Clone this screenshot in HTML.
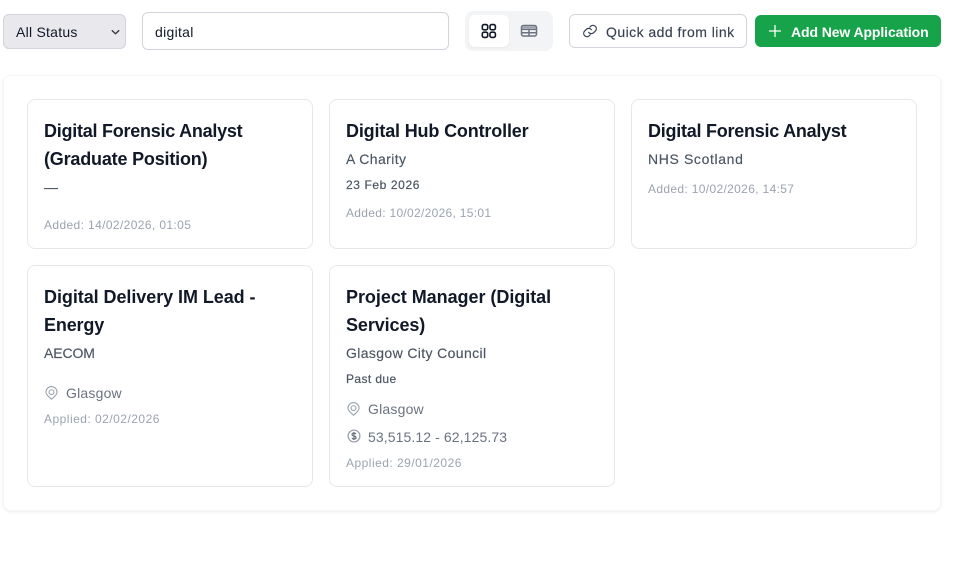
<!DOCTYPE html>
<html lang="en">
<head>
<meta charset="utf-8">
<title>Applications</title>
<style>
html,body{margin:0;padding:0;background:#fff;}
body{width:956px;height:567px;position:relative;overflow:hidden;font-family:"Liberation Sans",sans-serif;}
div,span,svg{position:absolute;box-sizing:border-box;}
.t{white-space:nowrap;}
.card{background:#fff;border:1px solid #e5e7eb;border-radius:8px;}
.title{font-size:18px;font-weight:700;color:#111827;line-height:28px;height:28px;white-space:nowrap;}
.co{font-size:14px;color:#4b5563;line-height:20px;height:20px;letter-spacing:.37px;white-space:nowrap;-webkit-text-stroke:.15px #4b5563;}
.due{font-size:12px;color:#4b5563;line-height:16px;height:16px;letter-spacing:.4px;white-space:nowrap;-webkit-text-stroke:.2px #4b5563;}
.meta{font-size:14px;color:#6b7280;line-height:20px;height:20px;letter-spacing:.2px;white-space:nowrap;}
.date{font-size:12px;color:#9ca3af;line-height:16px;height:16px;letter-spacing:.36px;white-space:nowrap;}
</style>
</head>
<body>
<!-- toolbar -->
<div style="left:3px;top:14px;width:123px;height:35px;background:#e8e8ed;border:1px solid #d1d5db;border-radius:6px;"></div>
<div class="t" style="left:16px;top:22px;font-size:14px;line-height:20px;color:#111827;letter-spacing:.25px;">All Status</div>
<svg style="left:110px;top:28px;" width="11" height="8" viewBox="0 0 11 8" fill="none" stroke="#333" stroke-width="1.3" stroke-linecap="round" stroke-linejoin="round"><path d="M2.2 2.6L5.5 5.8L8.8 2.6"/></svg>

<div style="left:142px;top:12px;width:307px;height:38px;background:#fff;border:1px solid #d1d5db;border-radius:6px;"></div>
<div class="t" style="left:155px;top:22px;font-size:14px;line-height:20px;color:#111827;letter-spacing:.3px;">digital</div>

<div style="left:465px;top:11px;width:88px;height:40px;background:#f3f4f6;border-radius:8px;"></div>
<div style="left:469px;top:15px;width:40px;height:32px;background:#fff;border-radius:6px;box-shadow:0 1px 2px rgba(0,0,0,.05);"></div>
<svg style="left:480px;top:22px;" width="18" height="18" viewBox="0 0 18 18" fill="none" stroke="#111827" stroke-width="1.6"><rect x="2.3" y="2.6" width="5.4" height="5.2" rx="1.7"/><rect x="10" y="2.6" width="5.4" height="5.2" rx="1.7"/><rect x="2.3" y="10.2" width="5.4" height="5.2" rx="1.7"/><rect x="10" y="10.2" width="5.4" height="5.2" rx="1.7"/></svg>
<svg style="left:520px;top:22px;" width="18" height="18" viewBox="0 0 18 18" fill="none" stroke="#6b7280" stroke-width="1.5"><rect x="1.5" y="3.5" width="15" height="10.5" rx="2"/><path d="M1.5 7.4H16.5M1.5 10.8H16.5M9 7.4V14"/><path d="M2.5 5.4H15.5" stroke="#9ca3af" stroke-width="1.8"/></svg>

<div style="left:569px;top:14px;width:178px;height:34px;background:#fff;border:1px solid #d1d5db;border-radius:6px;"></div>
<svg style="left:582px;top:23px;" width="16" height="16" viewBox="0 0 24 24" fill="none" stroke="#374151" stroke-width="1.8" stroke-linecap="round" stroke-linejoin="round"><path d="M10 14a5 5 0 0 0 7.5.5l3-3a5 5 0 0 0-7-7l-1.7 1.7"/><path d="M14 10a5 5 0 0 0-7.5-.5l-3 3a5 5 0 0 0 7 7l1.7-1.7"/></svg>
<div class="t" style="left:606px;top:22px;font-size:14px;line-height:20px;color:#374151;letter-spacing:.46px;-webkit-text-stroke:.15px #374151;">Quick add from link</div>

<div style="left:755px;top:15px;width:186px;height:32px;background:#16a34a;border-radius:6px;"></div>
<svg style="left:767px;top:23px;" width="16" height="16" viewBox="0 0 16 16" fill="none" stroke="#fff" stroke-width="1.3" stroke-linecap="round"><path d="M8 2.5V13.5M2.5 8H13.5"/></svg>
<div class="t" style="left:791px;top:22px;font-size:14px;line-height:20px;color:#fff;font-weight:700;letter-spacing:-.1px;">Add New Application</div>

<!-- panel -->
<div style="left:3px;top:75px;width:938px;height:436px;background:#fff;border-radius:8px;box-shadow:0 1px 3px rgba(0,0,0,.08);border:1px solid #f6f6f8;"></div>

<!-- card 1 -->
<div class="card" style="left:27px;top:99px;width:286px;height:150px;"></div>
<div class="title" style="left:44px;top:117px;letter-spacing:-.25px;">Digital Forensic Analyst</div>
<div class="title" style="left:44px;top:145px;letter-spacing:-.19px;">(Graduate Position)</div>
<div class="co" style="left:44px;top:177px;letter-spacing:0;">—</div>
<div class="date" style="left:44px;top:217px;letter-spacing:.38px;">Added: 14/02/2026, 01:05</div>

<!-- card 2 -->
<div class="card" style="left:329px;top:99px;width:286px;height:150px;"></div>
<div class="title" style="left:346px;top:117px;letter-spacing:-.16px;">Digital Hub Controller</div>
<div class="co" style="left:346px;top:149px;letter-spacing:.4px;">A Charity</div>
<div class="due" style="left:346px;top:177px;letter-spacing:.6px;">23 Feb 2026</div>
<div class="date" style="left:346px;top:205px;letter-spacing:.3px;">Added: 10/02/2026, 15:01</div>

<!-- card 3 -->
<div class="card" style="left:631px;top:99px;width:286px;height:150px;"></div>
<div class="title" style="left:648px;top:117px;letter-spacing:-.25px;">Digital Forensic Analyst</div>
<div class="co" style="left:648px;top:149px;letter-spacing:.63px;">NHS Scotland</div>
<div class="date" style="left:648px;top:181px;letter-spacing:.34px;">Added: 10/02/2026, 14:57</div>

<!-- card 4 -->
<div class="card" style="left:27px;top:265px;width:286px;height:222px;"></div>
<div class="title" style="left:44px;top:283px;letter-spacing:-.06px;">Digital Delivery IM Lead -</div>
<div class="title" style="left:44px;top:311px;letter-spacing:-.15px;">Energy</div>
<div class="co" style="left:44px;top:343px;letter-spacing:-.1px;">AECOM</div>
<svg style="left:45px;top:386px;" width="13" height="14" viewBox="0 0 14 15" fill="none" stroke="#9ca3af" stroke-width="1.2"><path d="M7 14.2C4.6 12 1 9.6 1 6.6a6 6 0 0 1 12 0c0 3-3.6 5.4-6 7.6z"/><circle cx="7" cy="6.6" r="2.6"/></svg>
<div class="meta" style="left:66px;top:383px;">Glasgow</div>
<div class="date" style="left:44px;top:411px;letter-spacing:.48px;">Applied: 02/02/2026</div>

<!-- card 5 -->
<div class="card" style="left:329px;top:265px;width:286px;height:222px;"></div>
<div class="title" style="left:346px;top:283px;letter-spacing:-.04px;">Project Manager (Digital</div>
<div class="title" style="left:346px;top:311px;letter-spacing:-.1px;">Services)</div>
<div class="co" style="left:346px;top:343px;letter-spacing:.37px;">Glasgow City Council</div>
<div class="due" style="left:346px;top:371px;letter-spacing:.4px;">Past due</div>
<svg style="left:347px;top:402px;" width="13" height="14" viewBox="0 0 14 15" fill="none" stroke="#9ca3af" stroke-width="1.2"><path d="M7 14.2C4.6 12 1 9.6 1 6.6a6 6 0 0 1 12 0c0 3-3.6 5.4-6 7.6z"/><circle cx="7" cy="6.6" r="2.6"/></svg>
<div class="meta" style="left:368px;top:399px;">Glasgow</div>
<svg style="left:347px;top:429px;" width="14" height="14" viewBox="0 0 14 14" fill="none" stroke="#9ca3af" stroke-width="1.3"><circle cx="7" cy="7" r="5.9"/><path d="M9 5.1C8.6 4.4 7.8 4 7 4 5.9 4 5 4.6 5 5.5S5.9 6.7 7 7s2 .7 2 1.6S8.1 10 7 10c-.8 0-1.6-.4-2-1.1M7 3v8" stroke="#6b7280" stroke-width="1.2"/></svg>
<div class="meta" style="left:368px;top:427px;letter-spacing:.1px;">53,515.12 - 62,125.73</div>
<div class="date" style="left:346px;top:455px;letter-spacing:.48px;">Applied: 29/01/2026</div>
</body>
</html>
